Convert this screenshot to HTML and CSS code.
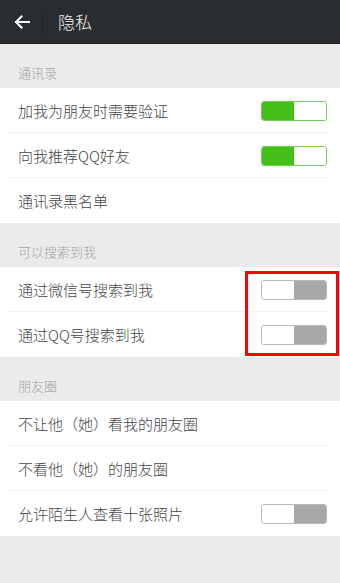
FILE: index.html
```html
<!DOCTYPE html>
<html lang="zh">
<head>
<meta charset="utf-8">
<link rel="stylesheet" href="styles.css">
</head>
<body>
<div class="app">
  <header class="topbar">
    <span class="back">
      <svg width="16" height="14" viewBox="0 0 16 14"><path d="M15 7H2M7.5 1.5L2 7l5.5 5.5" fill="none" stroke="#fff" stroke-width="2" stroke-linecap="square"/></svg>
    </span>
    <span class="divider"></span>
    <span class="title">隐私</span>
  </header>

  <div class="section-title">通讯录</div>
  <div class="group">
    <div class="row"><span class="label">加我为朋友时需要验证</span><span class="toggle on"><i></i><b></b></span></div>
    <div class="row"><span class="label">向我推荐QQ好友</span><span class="toggle on"><i></i><b></b></span></div>
    <div class="row"><span class="label">通讯录黑名单</span></div>
  </div>

  <div class="section-title">可以搜索到我</div>
  <div class="group">
    <div class="row"><span class="label">通过微信号搜索到我</span><span class="toggle off"><i></i><b></b></span></div>
    <div class="row"><span class="label">通过QQ号搜索到我</span><span class="toggle off"><i></i><b></b></span></div>
    <div class="highlight"></div>
  </div>

  <div class="section-title">朋友圈</div>
  <div class="group">
    <div class="row"><span class="label">不让他（她）看我的朋友圈</span></div>
    <div class="row"><span class="label">不看他（她）的朋友圈</span></div>
    <div class="row"><span class="label">允许陌生人查看十张照片</span><span class="toggle off"><i></i><b></b></span></div>
  </div>
</div>
</body>
</html>
```

FILE: styles.css
```css
* { box-sizing: border-box; margin: 0; padding: 0; }
html, body { width: 340px; height: 583px; overflow: hidden; }
body {
  background: #ebebeb;
  font-family: "Noto Sans CJK SC", "Noto Sans", sans-serif;
}
.app { width: 340px; }
.topbar {
  height: 44px;
  background: #2a2d30;
  display: flex;
  align-items: center;
  border-bottom: 1px solid #1f2224;
}
.back {
  width: 42px;
  display: flex;
  justify-content: center;
  padding-left: 2px;
}
.back svg { display: block; }
.divider {
  width: 1px;
  height: 24px;
  background: #222528;
}
.title {
  margin-left: 15px;
  color: #f2f2f2;
  font-size: 17px;
  font-weight: 300;
}
.section-title {
  height: 44px;
  padding: 20px 0 0 18px;
  font-size: 13px;
  line-height: 18px;
  color: #a3a3a3;
  font-weight: 300;
}
.group {
  background: #fff;
  position: relative;
}
.row {
  height: 45px;
  display: flex;
  align-items: center;
  justify-content: space-between;
  padding: 0 13px 0 18px;
  position: relative;
}
.row + .row::before {
  content: "";
  position: absolute;
  left: 8px;
  right: 12px;
  top: -1px;
  height: 1px;
  background: #f1f1f1;
}
.label {
  font-size: 15px;
  color: #454545;
  font-weight: 300;
}
.toggle {
  width: 66px;
  height: 20px;
  display: flex;
  border-radius: 3px;
  overflow: hidden;
}
.toggle i, .toggle b { flex: 1; display: block; }
.toggle.on { border: 1px solid #6fd24c; }
.toggle.on i { background: #45c01a; }
.toggle.on b { background: #fff; }
.toggle.off { border: 1px solid #b9b9b9; }
.toggle.off i { background: #fff; }
.toggle.off b { background: #a8a8a8; }
.highlight {
  position: absolute;
  left: 245px;
  top: 4px;
  width: 94px;
  height: 85px;
  border: 3px solid #ff0000;
  pointer-events: none;
}
```
